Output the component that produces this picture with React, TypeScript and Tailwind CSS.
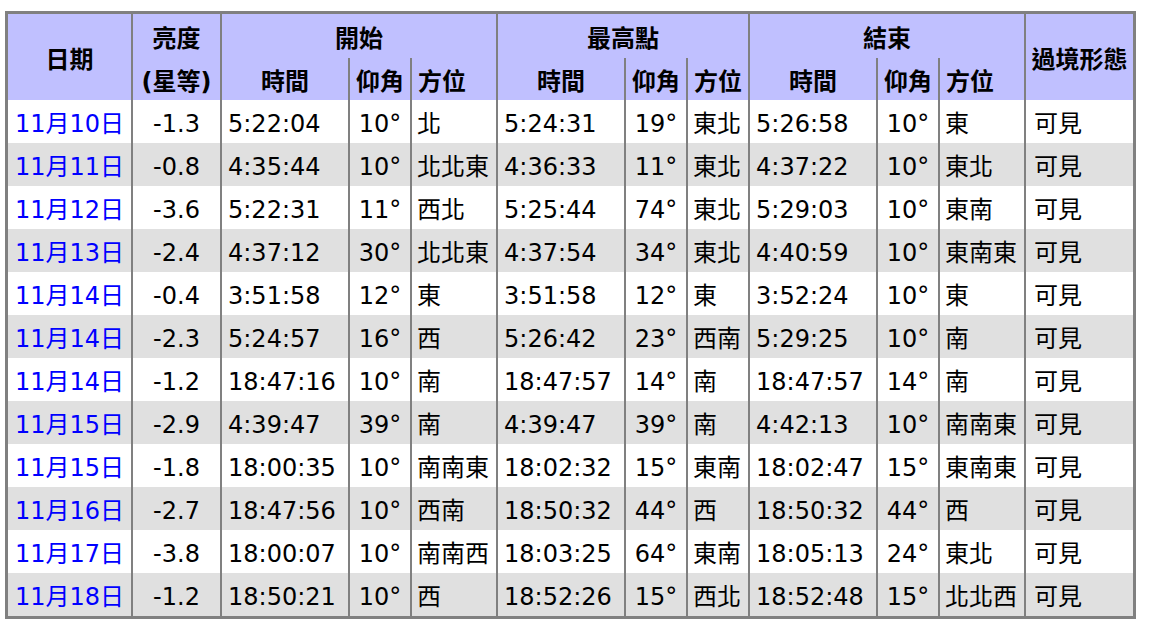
import React from "react";

type Row = {
    date: string;
    mag: string;
    start: [string, string, string];
    peak: [string, string, string];
    end: [string, string, string];
    state: string;
};

const rows: Row[] = [
    { date: "11月10日", mag: "-1.3", start: ["5:22:04", "10°", "北"], peak: ["5:24:31", "19°", "東北"], end: ["5:26:58", "10°", "東"], state: "可見" },
    { date: "11月11日", mag: "-0.8", start: ["4:35:44", "10°", "北北東"], peak: ["4:36:33", "11°", "東北"], end: ["4:37:22", "10°", "東北"], state: "可見" },
    { date: "11月12日", mag: "-3.6", start: ["5:22:31", "11°", "西北"], peak: ["5:25:44", "74°", "東北"], end: ["5:29:03", "10°", "東南"], state: "可見" },
    { date: "11月13日", mag: "-2.4", start: ["4:37:12", "30°", "北北東"], peak: ["4:37:54", "34°", "東北"], end: ["4:40:59", "10°", "東南東"], state: "可見" },
    { date: "11月14日", mag: "-0.4", start: ["3:51:58", "12°", "東"], peak: ["3:51:58", "12°", "東"], end: ["3:52:24", "10°", "東"], state: "可見" },
    { date: "11月14日", mag: "-2.3", start: ["5:24:57", "16°", "西"], peak: ["5:26:42", "23°", "西南"], end: ["5:29:25", "10°", "南"], state: "可見" },
    { date: "11月14日", mag: "-1.2", start: ["18:47:16", "10°", "南"], peak: ["18:47:57", "14°", "南"], end: ["18:47:57", "14°", "南"], state: "可見" },
    { date: "11月15日", mag: "-2.9", start: ["4:39:47", "39°", "南"], peak: ["4:39:47", "39°", "南"], end: ["4:42:13", "10°", "南南東"], state: "可見" },
    { date: "11月15日", mag: "-1.8", start: ["18:00:35", "10°", "南南東"], peak: ["18:02:32", "15°", "東南"], end: ["18:02:47", "15°", "東南東"], state: "可見" },
    { date: "11月16日", mag: "-2.7", start: ["18:47:56", "10°", "西南"], peak: ["18:50:32", "44°", "西"], end: ["18:50:32", "44°", "西"], state: "可見" },
    { date: "11月17日", mag: "-3.8", start: ["18:00:07", "10°", "南南西"], peak: ["18:03:25", "64°", "東南"], end: ["18:05:13", "24°", "東北"], state: "可見" },
    { date: "11月18日", mag: "-1.2", start: ["18:50:21", "10°", "西"], peak: ["18:52:26", "15°", "西北"], end: ["18:52:48", "15°", "北北西"], state: "可見" }
];

const colWidths = [125, 89, 128, 62, 86, 128, 62, 62, 128, 62, 86, 107];

const sep = "border-r-2 border-[#808080]";
const th = "font-bold whitespace-nowrap px-0 pb-0 pt-[5px]";
const td = "whitespace-nowrap px-0 pb-0 pt-[5px] h-[43px]";

export default function App() {
    return (
        <div className="min-h-screen bg-white pt-[11px] pl-[5px]" style={{ fontFamily: '"DejaVu Sans", "Noto Sans CJK TC", sans-serif' }}>
            <table className="table-fixed border-separate border-spacing-0 border-[3px] border-[#808080] w-[1131px] text-[24px] leading-none text-black">
                <colgroup>
                    {colWidths.map((w, i) => (
                        <col key={i} style={{ width: w }} />
                    ))}
                </colgroup>
                <thead className="bg-[#c0c0ff]">
                    <tr className="h-[44px]">
                        <th rowSpan={2} className={`${th} ${sep} text-center`}>日期</th>
                        <th className={`${th} ${sep} text-center`}>亮度</th>
                        <th colSpan={3} className={`${th} ${sep} text-center`}>開始</th>
                        <th colSpan={3} className={`${th} ${sep} text-center`}>最高點</th>
                        <th colSpan={3} className={`${th} ${sep} text-center`}>結束</th>
                        <th rowSpan={2} className={`${th} text-center`}>過境形態</th>
                    </tr>
                    <tr className="h-[42px]">
                        <th className={`${th} ${sep} text-center`}>(星等)</th>
                        {[0, 1, 2].map((g) => (
                            <React.Fragment key={g}>
                                <th className={`${th} ${sep} text-center`}>時間</th>
                                <th className={`${th} ${sep} text-center`}>仰角</th>
                                <th className={`${th} ${sep} text-left pl-[6px]`}>方位</th>
                            </React.Fragment>
                        ))}
                    </tr>
                </thead>
                <tbody>
                    {rows.map((r, i) => (
                        <tr key={i} className={i % 2 === 0 ? "bg-white" : "bg-[#e0e0e0]"}>
                            <td className={`${td} ${sep} text-center text-[#0000ff]`}>{r.date}</td>
                            <td className={`${td} ${sep} text-center`}>{r.mag}</td>
                            {[r.start, r.peak, r.end].map((g, j) => (
                                <React.Fragment key={j}>
                                    <td className={`${td} ${sep} text-left pl-[6px]`}>{g[0]}</td>
                                    <td className={`${td} ${sep} text-center`}>{g[1]}</td>
                                    <td className={`${td} ${sep} text-left pl-[5px]`}>{g[2]}</td>
                                </React.Fragment>
                            ))}
                            <td className={`${td} text-left pl-[8px]`}>{r.state}</td>
                        </tr>
                    ))}
                </tbody>
            </table>
        </div>
    );
}
